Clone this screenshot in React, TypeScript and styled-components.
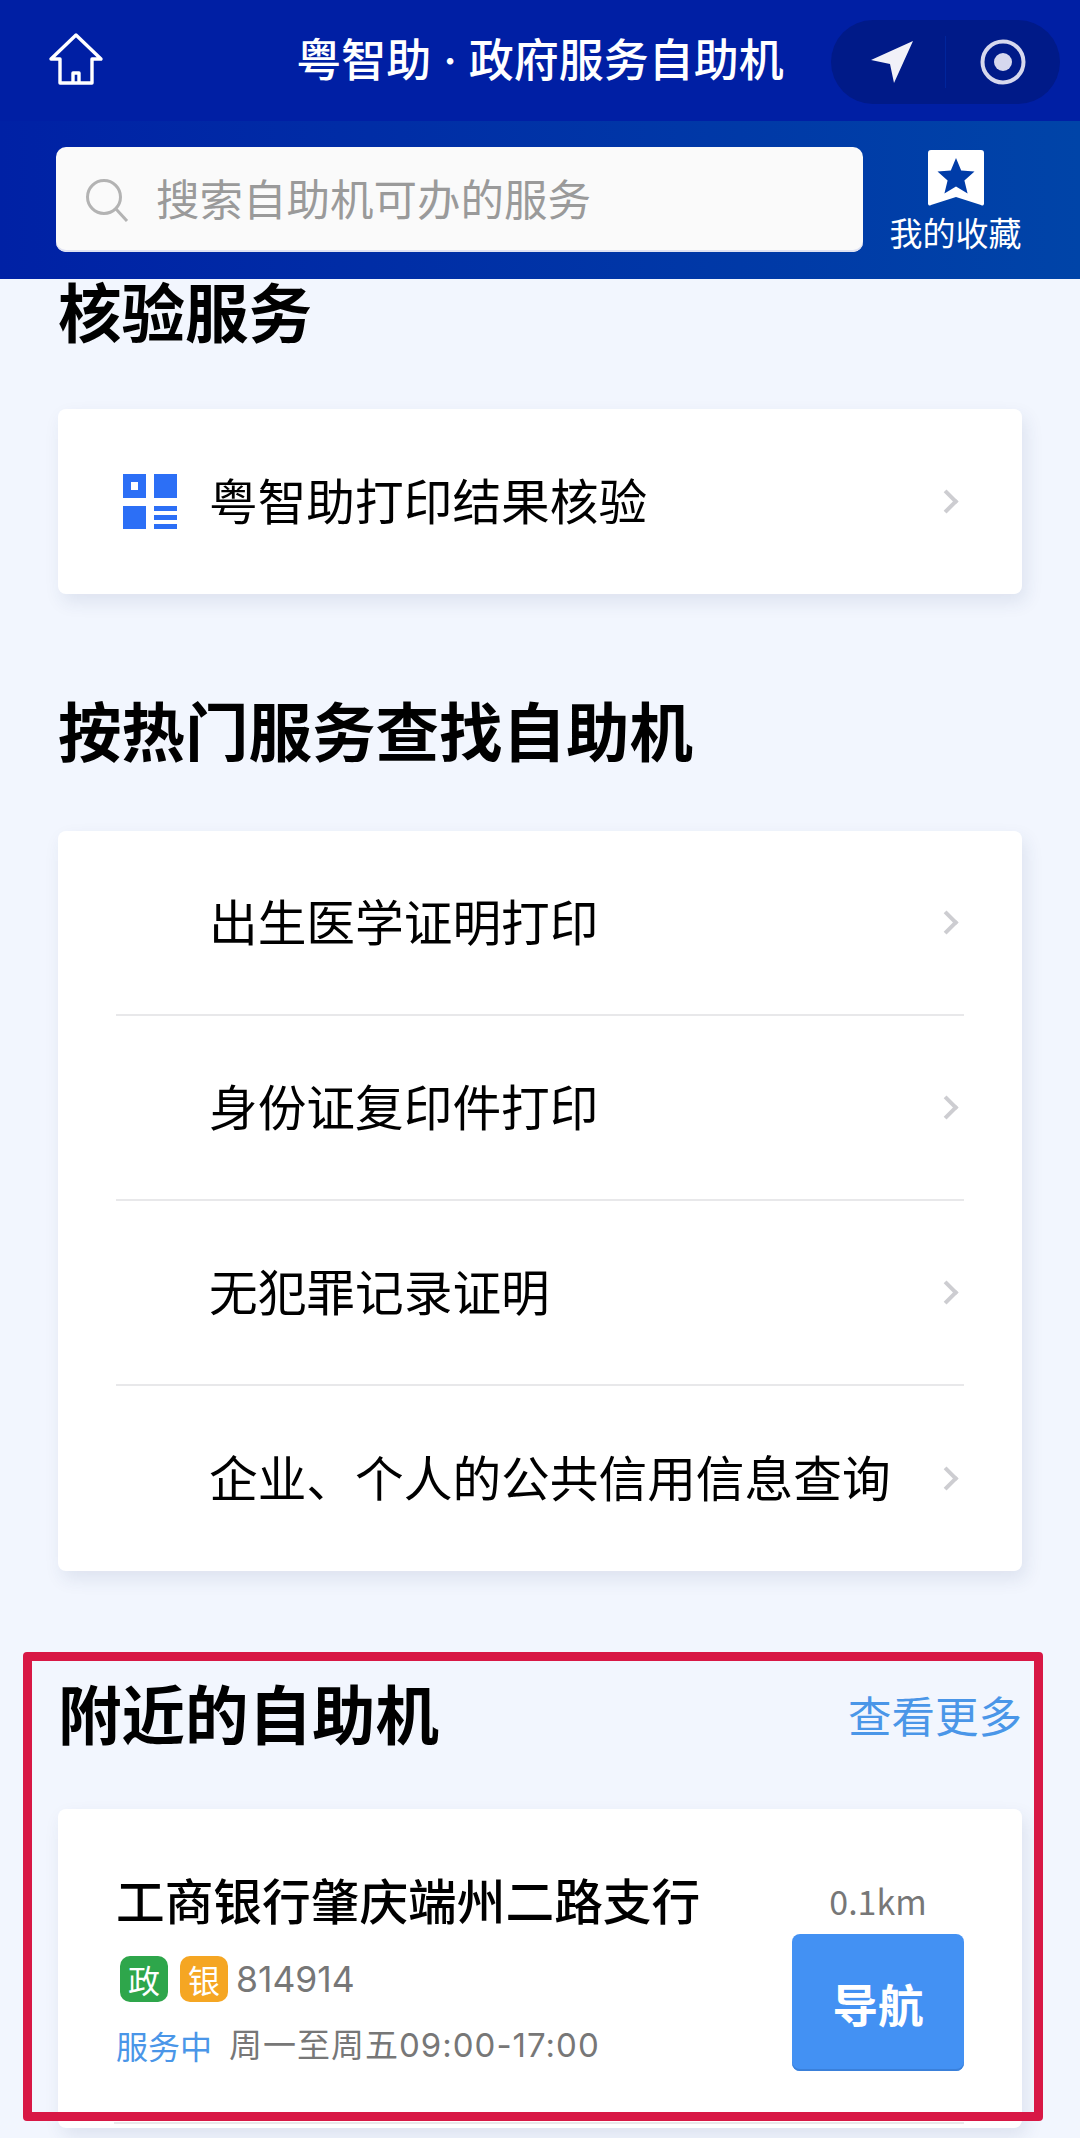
import React from 'react';
import styled, { createGlobalStyle } from 'styled-components';

const hotServices = [
  '出生医学证明打印',
  '身份证复印件打印',
  '无犯罪记录证明',
  '企业、个人的公共信用信息查询',
];

export default function App(): JSX.Element {
  return (
    <Page>
      <GlobalStyle />
      <Header>
        <NavBar>
          <HomeButton>
            <svg width="56" height="56" viewBox="0 0 56 56" fill="none">
              <path
                d="M3 28 L28 4 L53 28 H44 V52 H12 V28 Z M25 52 V42 H31 V52"
                stroke="#fff"
                strokeWidth="3.4"
                strokeLinejoin="round"
              />
            </svg>
          </HomeButton>
          <NavTitle>粤智助 · 政府服务自助机</NavTitle>
          <Capsule>
            <CapsuleSlot>
              <NavArrow width="44" height="44" viewBox="0 0 44 44">
                <path d="M1 20 L43 1 L24 43 L20 24 Z" fill="#f1f1f8" />
              </NavArrow>
            </CapsuleSlot>
            <CapsuleDivider />
            <CapsuleSlot>
              <svg width="46" height="46" viewBox="0 0 46 46" fill="none">
                <circle cx="23" cy="23" r="20.5" stroke="#d6d8ee" strokeWidth="4" />
                <circle cx="23" cy="23" r="9" fill="#d6d8ee" />
              </svg>
            </CapsuleSlot>
          </Capsule>
        </NavBar>
        <SearchRow>
          <SearchBox>
            <svg width="44" height="44" viewBox="0 0 44 44" fill="none">
              <circle cx="19" cy="19" r="16.5" stroke="#b3b3b3" strokeWidth="3" />
              <path d="M31 31 L42 43" stroke="#b3b3b3" strokeWidth="3" />
            </svg>
            <SearchPlaceholder>搜索自助机可办的服务</SearchPlaceholder>
          </SearchBox>
          <Favourites>
            <svg width="56" height="56" viewBox="0 0 56 56">
              <path
                d="M3 0 H53 A3 3 0 0 1 56 3 V54 A2 2 0 0 1 53 55 L28 47 L3 55 A2 2 0 0 1 0 54 V3 A3 3 0 0 1 3 0 Z"
                fill="#fff"
              />
              <path
                d="M28 8 L33.2 20.6 L46.5 21.6 L36.4 30.4 L39.6 43.6 L28 36.5 L16.4 43.6 L19.6 30.4 L9.5 21.6 L22.8 20.6 Z"
                fill="#003ca8"
              />
            </svg>
            <FavouritesLabel>我的收藏</FavouritesLabel>
          </Favourites>
        </SearchRow>
      </Header>

      <Main>
        <Heading>核验服务</Heading>
        <Card>
          <ServiceRow>
            <ServiceIcon>
              <svg width="54" height="55" viewBox="0 0 54 55">
                <path
                  d="M0 0 H23 V24 H0 Z M8 8 V16 H15 V8 Z"
                  fill="#2c6ff6"
                  fillRule="evenodd"
                />
                <rect x="31" width="23" height="24" fill="#2c6ff6" />
                <rect y="32" width="23" height="23" fill="#2c6ff6" />
                <rect x="31" y="32" width="23" height="5" fill="#2c6ff6" />
                <rect x="31" y="41" width="23" height="5" fill="#2c6ff6" />
                <rect x="31" y="50" width="23" height="5" fill="#2c6ff6" />
              </svg>
            </ServiceIcon>
            <ServiceName>粤智助打印结果核验</ServiceName>
            <Chevron />
          </ServiceRow>
        </Card>

        <Heading $top={104}>按热门服务查找自助机</Heading>
        <Card $top={58}>
          {hotServices.map((name) => (
            <ServiceRow key={name}>
              <ServiceIcon />
              <ServiceName>{name}</ServiceName>
              <Chevron />
            </ServiceRow>
          ))}
        </Card>

        <Nearby>
          <Annotation />
          <NearbyHead>
            <Heading>附近的自助机</Heading>
            <MoreLink>查看更多</MoreLink>
          </NearbyHead>
          <MachineCard>
            <MachineInfo>
              <MachineName>工商银行肇庆端州二路支行</MachineName>
              <TagRow>
                <Tag $color="#2ea64b">政</Tag>
                <Tag $color="#f5a623">银</Tag>
                <MachineCode>814914</MachineCode>
              </TagRow>
              <HoursRow>
                <Status>服务中</Status>
                <Hours>周一至周五09:00-17:00</Hours>
              </HoursRow>
            </MachineInfo>
            <MachineAside>
              <Distance>0.1km</Distance>
              <NavigateButton>导航</NavigateButton>
            </MachineAside>
            <MachineDivider />
          </MachineCard>
        </Nearby>
      </Main>
    </Page>
  );
}

const GlobalStyle = createGlobalStyle`
  html, body {
    margin: 0;
    padding: 0;
    background: #f2f6fe;
  }
  * {
    box-sizing: border-box;
  }
  body {
    font-family: "Noto Sans CJK SC", "Noto Sans", sans-serif;
  }
`;

const Page = styled.div`
  width: 1080px;
  height: 2138px;
  overflow: hidden;
  background: #f2f6fe;
  color: #000;
`;

const Header = styled.header`
  color: #fff;
`;

const NavBar = styled.div`
  position: relative;
  display: flex;
  align-items: center;
  justify-content: space-between;
  height: 121px;
  padding: 0 20px 0 48px;
  background: #001fa4;
`;

const HomeButton = styled.div`
  display: flex;
  width: 56px;
  height: 56px;
  margin-top: -4px;
`;

const NavTitle = styled.div`
  position: absolute;
  left: 0;
  right: 0;
  top: 32px;
  text-align: center;
  font-family: "Inter", "Noto Sans CJK SC", sans-serif;
  font-size: 45px;
  line-height: 58px;
  font-weight: 500;
  white-space: nowrap;
`;

const Capsule = styled.div`
  display: flex;
  align-items: center;
  width: 229px;
  height: 84px;
  margin-top: 2px;
  border-radius: 42px;
  background: #001a88;
`;

const CapsuleSlot = styled.div`
  flex: 1;
  display: flex;
  align-items: center;
  justify-content: center;
`;

const NavArrow = styled.svg`
  margin-left: 7px;
`;

const CapsuleDivider = styled.div`
  width: 1px;
  height: 52px;
  background: #00259c;
`;

const SearchRow = styled.div`
  display: flex;
  height: 158px;
  padding: 27px 0 0 56px;
  background: linear-gradient(90deg, #0021a5 0%, #0044a8 100%);
`;

const SearchBox = styled.div`
  display: flex;
  align-items: center;
  gap: 27px;
  width: 807px;
  height: 105px;
  margin-top: -1px;
  padding-left: 29px;
  border-radius: 10px;
  background: #fafafa;
  box-shadow: inset 0 -2px 0 #dfe2f2;
`;

const SearchPlaceholder = styled.span`
  padding-bottom: 4px;
  font-size: 43.5px;
  line-height: 58px;
  color: #9a9a9a;
`;

const Favourites = styled.div`
  display: flex;
  flex-direction: column;
  align-items: center;
  width: 160px;
  margin-left: 13px;
  padding-top: 2px;
`;

const FavouritesLabel = styled.span`
  margin-top: 6px;
  margin-right: 1px;
  font-size: 33px;
  line-height: 40px;
  white-space: nowrap;
`;

const Main = styled.main`
  padding: 0 58px;
`;

const Heading = styled.h2<{ $top?: number }>`
  margin: ${({ $top }) => $top ?? 0}px 0 0;
  padding-bottom: 14px;
  font-size: 63.5px;
  line-height: 61px;
  font-weight: 700;
  white-space: nowrap;
`;

const Card = styled.div<{ $top?: number }>`
  margin-top: ${({ $top }) => $top ?? 55}px;
  border-radius: 8px;
  background: #fff;
  box-shadow: 4px 8px 18px rgba(40, 60, 110, 0.1);
`;

const ServiceRow = styled.div`
  display: flex;
  align-items: center;
  height: 185px;
  margin: 0 58px;
  border-bottom: 2px solid #e8e8ea;

  &:last-child {
    border-bottom: none;
  }
`;

const ServiceIcon = styled.div`
  display: flex;
  width: 95px;
  flex-shrink: 0;
  margin-left: 7px;
`;

const ServiceName = styled.span`
  flex: 1;
  margin-left: -9px;
  padding-bottom: 6px;
  font-size: 48.7px;
  line-height: 64px;
  white-space: nowrap;
`;

const Chevron = styled.i`
  width: 17px;
  height: 17px;
  margin-right: 9px;
  border-top: 4.5px solid #cdcdd1;
  border-right: 4.5px solid #cdcdd1;
  transform: rotate(45deg);
  flex-shrink: 0;
`;

const Nearby = styled.section`
  position: relative;
  margin-top: 105px;
`;

const Annotation = styled.div`
  position: absolute;
  left: -35px;
  top: -24px;
  width: 1020px;
  height: 469px;
  border: 9px solid #d81845;
  border-radius: 4px;
  z-index: 2;
`;

const NearbyHead = styled.div`
  display: flex;
  align-items: center;
  justify-content: space-between;
  padding-top: 5px;
`;

const MoreLink = styled.span`
  padding-bottom: 8px;
  font-size: 43.5px;
  line-height: 58px;
  color: #4a96e8;
`;

const MachineCard = styled.div`
  position: relative;
  display: flex;
  justify-content: space-between;
  height: 319px;
  margin-top: 53px;
  padding: 56px 58px 0;
  border-radius: 8px;
  background: #fff;
  box-shadow: 4px 8px 18px rgba(40, 60, 110, 0.1);
`;

const MachineInfo = styled.div`
  display: flex;
  flex-direction: column;
`;

const MachineName = styled.div`
  font-size: 48.7px;
  line-height: 68px;
  font-weight: 500;
  white-space: nowrap;
`;

const TagRow = styled.div`
  display: flex;
  align-items: center;
  gap: 12px;
  margin: 23px 0 0 4px;
`;

const Tag = styled.span<{ $color: string }>`
  display: flex;
  align-items: center;
  justify-content: center;
  width: 48px;
  height: 46px;
  border-radius: 10px;
  background: ${({ $color }) => $color};
  color: #fff;
  font-size: 32px;
`;

const MachineCode = styled.span`
  margin-left: -4px;
  font-family: "Inter", "Noto Sans", sans-serif;
  font-size: 35.5px;
  color: #777;
`;

const HoursRow = styled.div`
  display: flex;
  align-items: center;
  gap: 17px;
  margin-top: 20px;
  line-height: 46px;
  font-size: 32px;
`;

const Status = styled.span`
  color: #4a96e8;
`;

const Hours = styled.span`
  font-family: "Inter", "Noto Sans CJK SC", sans-serif;
  font-size: 33px;
  letter-spacing: 1px;
  color: #777;
  white-space: nowrap;
`;

const MachineAside = styled.div`
  display: flex;
  flex-direction: column;
  align-items: center;
  width: 172px;
`;

const Distance = styled.div`
  margin-top: 11px;
  font-size: 34px;
  line-height: 50px;
  color: #777;
`;

const NavigateButton = styled.div`
  display: flex;
  align-items: center;
  justify-content: center;
  width: 172px;
  height: 137px;
  margin-top: 8px;
  border-radius: 8px;
  background: #4391f3;
  box-shadow: inset 0 -2px 0 #3a80da;
  color: #fff;
  font-size: 45.5px;
  font-weight: 700;
`;

const MachineDivider = styled.div`
  position: absolute;
  left: 56px;
  right: 58px;
  top: 313px;
  height: 2px;
  background: #e8e8ea;
`;
